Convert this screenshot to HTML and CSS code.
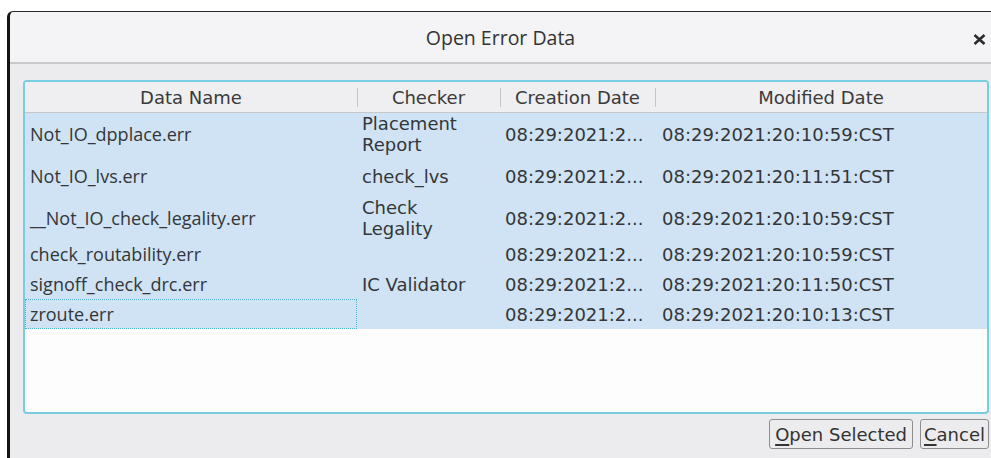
FILE: index.html
```html
<!DOCTYPE html>
<html lang="en">
<head>
<meta charset="utf-8">
<title>Open Error Data</title>
<link rel="stylesheet" href="styles.css">
</head>
<body>
<div class="dialog">
  <div class="titlebar">
    <span class="title">Open Error Data</span>
    <button class="close" aria-label="Close">
      <svg width="13" height="11" viewBox="0 0 13 11"><path d="M1.5 1 L11.5 10 M11.5 1 L1.5 10" stroke="#2b2b2b" stroke-width="2.6" fill="none"/></svg>
    </button>
  </div>
  <div class="content">
    <div class="list">
      <div class="head">
        <div class="hcell">Data Name</div>
        <div class="hcell">Checker</div>
        <div class="hcell">Creation Date</div>
        <div class="hcell">Modified Date</div>
      </div>
      <div class="rows">
        <div class="row tall">
          <div class="cell name">Not_IO_dpplace.err</div>
          <div class="cell">Placement<br>Report</div>
          <div class="cell">08:29:2021:2...</div>
          <div class="cell date">08:29:2021:20:10:59:CST</div>
        </div>
        <div class="row tall">
          <div class="cell name">Not_IO_lvs.err</div>
          <div class="cell">check_lvs</div>
          <div class="cell">08:29:2021:2...</div>
          <div class="cell date">08:29:2021:20:11:51:CST</div>
        </div>
        <div class="row tall">
          <div class="cell name">__Not_IO_check_legality.err</div>
          <div class="cell">Check<br>Legality</div>
          <div class="cell">08:29:2021:2...</div>
          <div class="cell date">08:29:2021:20:10:59:CST</div>
        </div>
        <div class="row">
          <div class="cell name">check_routability.err</div>
          <div class="cell"></div>
          <div class="cell">08:29:2021:2...</div>
          <div class="cell date">08:29:2021:20:10:59:CST</div>
        </div>
        <div class="row">
          <div class="cell name">signoff_check_drc.err</div>
          <div class="cell">IC Validator</div>
          <div class="cell">08:29:2021:2...</div>
          <div class="cell date">08:29:2021:20:11:50:CST</div>
        </div>
        <div class="row">
          <div class="cell name focus">zroute.err</div>
          <div class="cell"></div>
          <div class="cell">08:29:2021:2...</div>
          <div class="cell date">08:29:2021:20:10:13:CST</div>
        </div>
      </div>
    </div>
    <div class="buttons">
      <button class="btn"><span class="mn">O</span>pen Selected</button>
      <button class="btn narrow"><span class="mn">C</span>ancel</button>
    </div>
  </div>
</div>
</body>
</html>
```

FILE: styles.css
```css
* { box-sizing: border-box; }

html, body {
  margin: 0;
  height: 100%;
  background: #ffffff;
  overflow: hidden;
}

body {
  padding: 11px 0 0 7px;
  font-family: "DejaVu Sans", sans-serif;
  color: #333333;
}

.dialog {
  height: 447px;
  border-left: 3px solid #141414;
  border-top: 1px solid #2a2a2a;
  border-top-left-radius: 6px;
  display: flex;
  flex-direction: column;
  background: #ecebed;
}

/* window title bar */
.titlebar {
  height: 52px;
  flex: none;
  background: #f4f3f5;
  border-bottom: 2px solid #c9c8ca;
  border-top-left-radius: 5px;
  display: flex;
  align-items: center;
  justify-content: center;
  position: relative;
}

.title {
  font-family: "Open Sans", "Noto Sans", sans-serif;
  font-size: 19.5px;
  color: #333333;
}

.close {
  position: absolute;
  right: 5px;
  top: 22px;
  border: 0;
  padding: 0;
  background: none;
  display: flex;
}

.content {
  flex: 1;
  display: flex;
  flex-direction: column;
  padding: 16px 2px 0 13px;
}

/* the file list */
.list {
  height: 334px;
  border: 2px solid #79cde0;
  border-radius: 4px;
  background: #fdfdfd;
  overflow: hidden;
}

.head,
.row {
  display: grid;
  grid-template-columns: 332px 143px 155px 1fr;
}

.head {
  height: 31px;
  background: #efeef0;
  border-bottom: 1px solid #c7c7c9;
}

.hcell {
  display: flex;
  align-items: center;
  justify-content: center;
  font-size: 18px;
  color: #3a3a3a;
  position: relative;
}

.hcell + .hcell::before {
  content: "";
  position: absolute;
  left: 0;
  top: 6px;
  bottom: 5px;
  width: 1px;
  background: #c4c4c6;
}

.row {
  height: 30px;
  background: #cfe3f5;
}

.row.tall {
  height: 42px;
}

.cell {
  display: flex;
  align-items: center;
  padding-left: 5px;
  font-size: 18px;
  line-height: 21px;
  color: #343638;
  white-space: nowrap;
}

.cell.name {
  font-family: "Open Sans", "Noto Sans", sans-serif;
  font-size: 18px;
}

.cell.date {
  padding-left: 7px;
}

.cell.focus {
  border: 1px dotted #4fb3cc;
  padding-left: 4px;
}

/* dialog buttons */
.buttons {
  display: flex;
  justify-content: flex-end;
  gap: 7px;
  margin-top: 5px;
}

.btn {
  height: 30px;
  padding: 0 5px;
  font-family: "DejaVu Sans", sans-serif;
  font-size: 18px;
  color: #333333;
  background: #ecebed;
  border: 1px solid #8e8e90;
  border-radius: 3px;
}

.btn.narrow {
  padding: 0 3px;
}

.mn {
  text-decoration: underline;
  text-decoration-thickness: 2px;
  text-underline-offset: 3px;
}
```
